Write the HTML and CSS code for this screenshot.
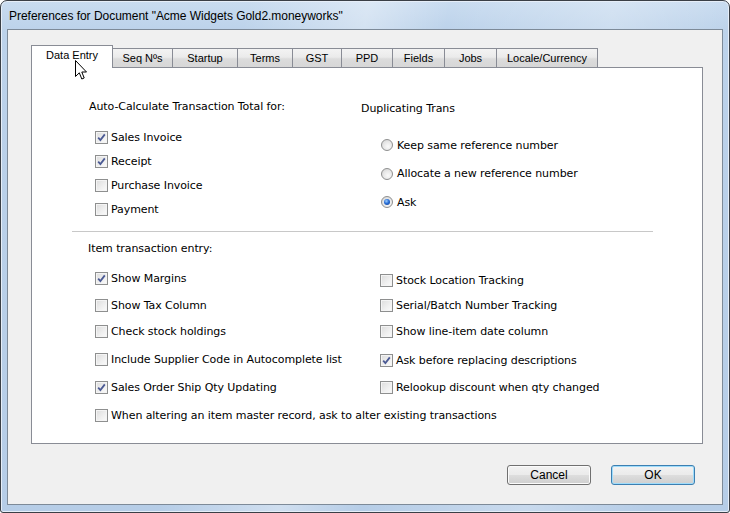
FILE: index.html
```html
<!DOCTYPE html>
<html>
<head>
<meta charset="utf-8">
<link rel="stylesheet" href="styles.css">
</head>
<body>
<div class="window">
  <div class="titlebar">Preferences for Document "Acme Widgets Gold2.moneyworks"</div>
  <div class="client">
    <div class="tabs">
      <div class="tab active w-data">Data Entry</div>
      <div class="tab w-seq">Seq Nºs</div>
      <div class="tab w-startup">Startup</div>
      <div class="tab w-terms">Terms</div>
      <div class="tab w-gst">GST</div>
      <div class="tab w-ppd">PPD</div>
      <div class="tab w-fields">Fields</div>
      <div class="tab w-jobs">Jobs</div>
      <div class="tab w-locale">Locale/Currency</div>
    </div>
    <div class="panel">
      <div class="top">
        <div class="col-left">
          <div class="heading">Auto-Calculate Transaction Total for:</div>
          <div class="rows-auto">
            <div class="row"><span class="cb on"><svg viewBox="0 0 11 11" width="11" height="11"><path d="M2.2 5.6 L4.4 8 L8.8 2.4" fill="none" stroke="#4b5a94" stroke-width="1.8"/></svg></span>Sales Invoice</div>
            <div class="row"><span class="cb on"><svg viewBox="0 0 11 11" width="11" height="11"><path d="M2.2 5.6 L4.4 8 L8.8 2.4" fill="none" stroke="#4b5a94" stroke-width="1.8"/></svg></span>Receipt</div>
            <div class="row"><span class="cb"></span>Purchase Invoice</div>
            <div class="row"><span class="cb"></span>Payment</div>
          </div>
        </div>
        <div class="col-right">
          <div class="heading">Duplicating Trans</div>
          <div class="rows-radio">
            <div class="row"><span class="rb"></span>Keep same reference number</div>
            <div class="row"><span class="rb"></span>Allocate a new reference number</div>
            <div class="row"><span class="rb on"><span class="dot"></span></span>Ask</div>
          </div>
        </div>
      </div>
      <div class="sep"></div>
      <div class="heading item-heading">Item transaction entry:</div>
      <div class="grid">
        <div class="row"><span class="cb on"><svg viewBox="0 0 11 11" width="11" height="11"><path d="M2.2 5.6 L4.4 8 L8.8 2.4" fill="none" stroke="#4b5a94" stroke-width="1.8"/></svg></span>Show Margins</div>
        <div class="row low"><span class="cb"></span>Stock Location Tracking</div>
        <div class="row"><span class="cb"></span>Show Tax Column</div>
        <div class="row"><span class="cb"></span>Serial/Batch Number Tracking</div>
        <div class="row"><span class="cb"></span>Check stock holdings</div>
        <div class="row"><span class="cb"></span>Show line-item date column</div>
        <div class="row"><span class="cb"></span>Include Supplier Code in Autocomplete list</div>
        <div class="row low"><span class="cb on"><svg viewBox="0 0 11 11" width="11" height="11"><path d="M2.2 5.6 L4.4 8 L8.8 2.4" fill="none" stroke="#4b5a94" stroke-width="1.8"/></svg></span>Ask before replacing descriptions</div>
        <div class="row"><span class="cb on"><svg viewBox="0 0 11 11" width="11" height="11"><path d="M2.2 5.6 L4.4 8 L8.8 2.4" fill="none" stroke="#4b5a94" stroke-width="1.8"/></svg></span>Sales Order Ship Qty Updating</div>
        <div class="row"><span class="cb"></span>Relookup discount when qty changed</div>
        <div class="row span2"><span class="cb"></span>When altering an item master record, ask to alter existing transactions</div>
      </div>
    </div>
    <div class="buttons">
      <div class="btn">Cancel</div>
      <div class="btn default">OK</div>
    </div>
  </div>
  <svg class="cursor" width="13" height="21" viewBox="0 0 13 21"><path d="M0.5 0.5 L0.5 16.5 L4.3 12.8 L6.8 19 L9.2 18 L6.8 12 L11.5 12 Z" fill="#fff" stroke="#000" stroke-width="1" stroke-linejoin="miter"/></svg>
</div>
</body>
</html>
```
FILE: styles.css
```css
* { box-sizing: border-box; }
html, body { margin: 0; padding: 0; background: #ffffff; }
body { width: 730px; height: 513px; overflow: hidden; font-family: "DejaVu Sans", sans-serif; font-size: 11px; letter-spacing: -0.08px; color: #000; }

.window {
  position: relative;
  width: 730px;
  height: 513px;
  border: 1px solid #3a3f46;
  border-radius: 7px 7px 3px 3px;
  padding: 0 6px 7px 6px;
  background:
    linear-gradient(100deg, rgba(255,255,255,0) 30%, rgba(255,255,255,0.35) 45%, rgba(255,255,255,0) 55%, rgba(255,255,255,0.25) 75%, rgba(255,255,255,0) 90%),
    linear-gradient(180deg, #c9dcf0 0px, #bcd2ea 30px, #b6cde7 100%);
  box-shadow: inset 0 0 0 1px #e6eef8;
  display: flex;
  flex-direction: column;
}

.titlebar {
  height: 28px;
  line-height: 30px;
  padding-left: 2px;
  font-family: "Liberation Sans", sans-serif;
  font-size: 12px;
  letter-spacing: -0.03px;
  color: #000;
  white-space: nowrap;
}

.client {
  height: 476px;
  border: 1px solid #7d8a98;
  background: #f0f0f0;
  display: flex;
  flex-direction: column;
}

.tabs {
  display: flex;
  align-items: flex-end;
  height: 37px;
  padding-left: 23px;
}

.tab {
  height: 19px;
  border: 1px solid #898c95;
  border-bottom: none;
  margin-left: -1px;
  background: linear-gradient(180deg, #f3f3f3 0%, #ebebeb 45%, #dcdcdc 55%, #d7d7d7 100%);
  font-family: "Liberation Sans", sans-serif;
  font-size: 11px;
  letter-spacing: 0;
  line-height: 18px;
  text-align: center;
  color: #000;
}
.tab.active {
  position: relative;
  z-index: 1;
  height: 23px;
  margin-left: 0;
  margin-bottom: -1px;
  background: #ffffff;
  line-height: 19px;
}
.w-data { width: 82px; }
.w-seq { width: 61px; }
.w-startup { width: 66px; }
.w-terms { width: 56px; }
.w-gst { width: 50px; }
.w-ppd { width: 52px; }
.w-fields { width: 53px; }
.w-jobs { width: 53px; }
.w-locale { width: 102px; }

.panel {
  width: 672px;
  height: 377px;
  margin-left: 23px;
  background: #ffffff;
  border: 1px solid #898c95;
}

.heading { line-height: 16px; white-space: nowrap; }

.row {
  display: flex;
  align-items: center;
  white-space: nowrap;
}

.top { display: flex; }
.col-left { width: 272px; margin-left: 57px; padding-top: 31px; }
.col-right { padding-top: 33px; }
.rows-auto { padding-top: 10px; padding-left: 6px; }
.rows-auto .row { height: 24px; }
.rows-radio { padding-top: 14px; padding-left: 20px; }
.rows-radio .row { height: 28.5px; }

.cb {
  flex: none;
  width: 13px;
  height: 13px;
  margin-right: 3px;
  border: 1px solid #8e8f8f;
  background: linear-gradient(135deg, #dcdcdc 0%, #f0f0f0 60%, #fbfbfb 100%);
  box-shadow: inset 0 0 0 1px #f4f4f4;
  display: flex;
  align-items: center;
  justify-content: center;
}

.rb {
  flex: none;
  width: 12px;
  height: 12px;
  margin-right: 4px;
  border-radius: 50%;
  border: 1px solid #8e8f8f;
  background: radial-gradient(circle at 60% 65%, #fafafa 0%, #e8e8e8 50%, #cfcfcf 100%);
  display: flex;
  align-items: center;
  justify-content: center;
}
.rb .dot {
  width: 6px;
  height: 6px;
  border-radius: 50%;
  background: radial-gradient(circle at 40% 35%, #9fd0ff 0%, #2a6fd6 45%, #0e3a8c 100%);
}

.sep {
  width: 581px;
  height: 1px;
  margin: 10px 0 0 40px;
  background: #c8c8c8;
}

.item-heading { margin: 9px 0 0 56px; }

.grid {
  display: grid;
  grid-template-columns: 285px 1fr;
  grid-template-rows: 27px 26px 27px 28px 28px 28px;
  margin: 8px 0 0 63px;
}
.grid .row.low { padding-top: 3px; }
.span2 { grid-column: 1 / 3; }

.buttons {
  display: flex;
  justify-content: flex-end;
  gap: 20px;
  padding: 21px 27px 0 0;
}
.btn {
  width: 84px;
  height: 20px;
  border: 1px solid #707070;
  border-radius: 3px;
  background: linear-gradient(180deg, #f2f2f2 0%, #ebebeb 48%, #dddddd 52%, #cfcfcf 100%);
  box-shadow: inset 0 0 0 1px #fbfbfb;
  font-family: "Liberation Sans", sans-serif;
  font-size: 12px;
  letter-spacing: 0;
  line-height: 18px;
  text-align: center;
  color: #000;
}
.btn.default {
  border-color: #3c7fb1;
  box-shadow: inset 0 0 0 1px #9fdcfb;
}

.cursor {
  position: absolute;
  left: 74px;
  top: 59px;
  z-index: 5;
}
```
